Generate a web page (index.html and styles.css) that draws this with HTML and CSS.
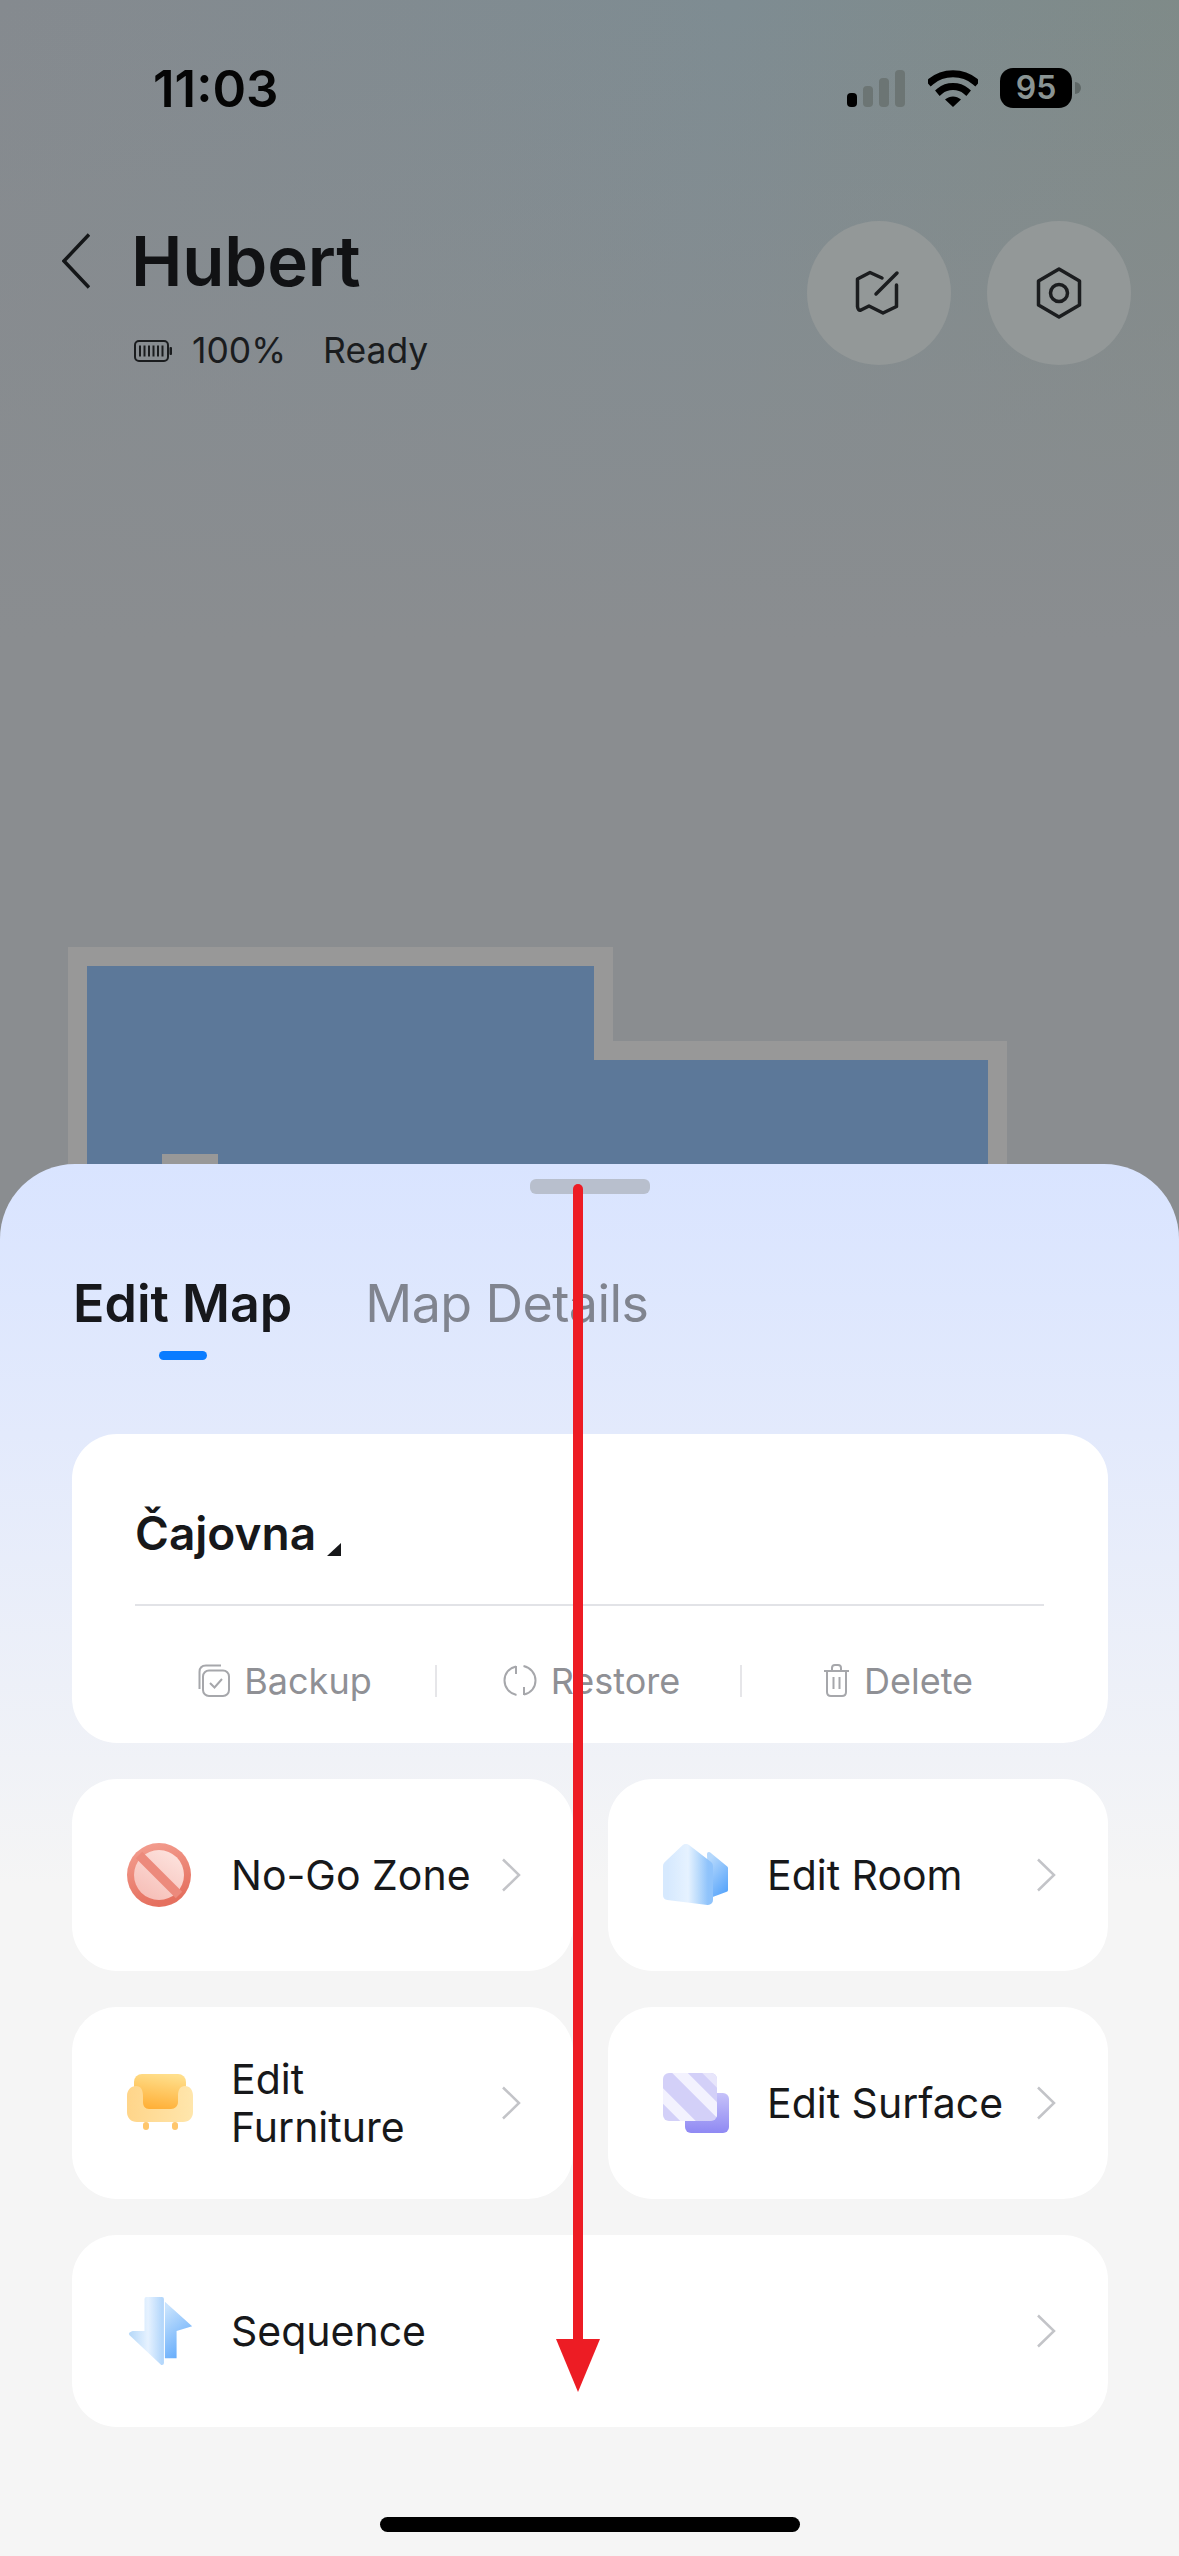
FILE: index.html
```html
<!DOCTYPE html>
<html lang="en">
<head>
  <meta charset="UTF-8">
  <meta name="viewport" content="width=device-width, initial-scale=1.0">
  <title>Edit Map</title>
  <link rel="stylesheet" href="styles.css">
</head>
<body>
  <div class="screen">
    <div class="status-bar">
      <span class="time">11:03</span>
      <div class="status-icons">
        <svg class="signal" width="58" height="37" viewBox="0 0 58 37">
          <rect x="0" y="23" width="10" height="14" rx="4" fill="#000"/>
          <rect x="16" y="16" width="10" height="21" rx="4" fill="#6c7574"/>
          <rect x="32" y="8" width="10" height="29" rx="4" fill="#6c7574"/>
          <rect x="48" y="0" width="10" height="37" rx="4" fill="#6c7574"/>
        </svg>
        <svg class="wifi" width="50" height="37" viewBox="0 0 50 37">
          <path d="M3 11.5C15 1 35 1 47 11.5" fill="none" stroke="#000" stroke-width="7" stroke-linecap="square"/>
          <path d="M12 21C19 15 31 15 38 21" fill="none" stroke="#000" stroke-width="7" stroke-linecap="square"/>
          <path d="M25 37L17 29.5C22 25.5 28 25.5 33 29.5Z" fill="#000"/>
        </svg>
        <div class="batt">
          <span class="batt-level">95</span>
          <span class="batt-nub"></span>
        </div>
      </div>
    </div>

    <div class="header">
      <div class="title-block">
        <div class="title-row">
          <svg class="back" width="28" height="56" viewBox="0 0 28 56">
            <path d="M27 1.5L2 28L27 54.500" fill="none" stroke="#141618" stroke-width="3.500"/>
          </svg>
          <h1>Hubert</h1>
        </div>
        <div class="sub-row">
          <svg width="38" height="22" viewBox="0 0 38 22">
            <rect x="1" y="1" width="33" height="20" rx="4" fill="none" stroke="#1a1c1e" stroke-width="2"/>
            <path d="M6 5.500V16.500M10.500 5.500V16.500M15 5.500V16.500M19.500 5.500V16.500M24 5.500V16.500M28.500 5.500V16.500" stroke="#1a1c1e" stroke-width="2"/>
            <rect x="35.500" y="7" width="2.500" height="8" rx="1" fill="#1a1c1e"/>
          </svg>
          <span class="level">100%</span>
          <span class="state">Ready</span>
        </div>
      </div>
      <div class="round-btns">
        <div class="round-btn">
          <svg width="50" height="50" viewBox="0 0 50 50">
            <path d="M28 10L16 4.500L3.500 11V38.500C4 42 5 42.500 7 42L15 38L29 45L42.500 38.500V17M43 5L22 26" fill="none" stroke="#1b1d1f" stroke-width="3.500" stroke-linecap="round" stroke-linejoin="round"/>
          </svg>
        </div>
        <div class="round-btn">
          <svg width="50" height="54" viewBox="0 0 50 54">
            <path d="M25 3L45.500 15V39L25 51L4.500 39V15Z" fill="none" stroke="#1b1d1f" stroke-width="3.500" stroke-linejoin="round"/>
            <circle cx="25" cy="27" r="8.500" fill="none" stroke="#1b1d1f" stroke-width="3.500"/>
          </svg>
        </div>
      </div>
    </div>

    <div class="map-area">
      <svg class="map" width="1179" height="799" viewBox="0 365 1179 799">
        <path d="M68 1164V947H613V1041H1007V1164Z" fill="#989898"/>
        <path d="M87 1164V966H594V1060H988V1164Z" fill="#5c7899"/>
        <rect x="162" y="1154" width="56" height="10" fill="#989898"/>
      </svg>
    </div>

    <div class="sheet">
      <div class="handle"></div>
      <div class="tabs">
        <div class="tab active">Edit Map<span class="tab-mark"></span></div>
        <div class="tab">Map Details</div>
      </div>

      <div class="map-card">
        <div class="map-name">
          <span>Čajovna</span>
          <svg width="14" height="13" viewBox="0 0 14 13"><path d="M14 0V13H0Z" fill="#17181a"/></svg>
        </div>
        <div class="map-actions">
          <div class="action">
            <svg width="32" height="33" viewBox="0 0 32 33" fill="none" stroke="#a6a7ab" stroke-width="2">
              <rect x="5" y="6.500" width="26" height="25.500" rx="6"/>
              <path d="M1.500 25V8C1.500 4 4 1.500 8 1.500H23"/>
              <path d="M12 19L16.500 23.500L24 15"/>
            </svg>
            <span>Backup</span>
          </div>
          <div class="action">
            <svg width="34" height="33" viewBox="0 0 34 33" fill="none" stroke="#a6a7ab" stroke-width="2">
              <path d="M13 2.500C6 4 1.500 9.500 1.500 16.500C1.500 23.500 6.500 29.500 13.500 31"/>
              <path d="M21 30.500C28 29 32.500 23.500 32.500 16.500C32.500 9.500 27.500 3.500 20.500 2"/>
              <path d="M13 2L13 10M21 31L21 23"/>
            </svg>
            <span>Restore</span>
          </div>
          <div class="action">
            <svg width="27" height="33" viewBox="0 0 27 33" fill="none" stroke="#a6a7ab" stroke-width="2">
              <path d="M1 7H26M9 7V4C9 2 10 1 12 1H15C17 1 18 2 18 4V7"/>
              <path d="M4 7V28C4 30.500 5.500 32 8 32H19C21.500 32 23 30.500 23 28V7"/>
              <path d="M10.500 13V25M16.500 13V25"/>
            </svg>
            <span>Delete</span>
          </div>
        </div>
      </div>

      <div class="tile-grid">
        <div class="tile">
          <svg class="tile-icon" width="70" height="70" viewBox="0 0 70 70">
            <defs>
              <linearGradient id="nogoRing" x1="0" y1="0" x2="0.300" y2="1">
                <stop offset="0" stop-color="#f4a193"/>
                <stop offset="1" stop-color="#e5705f"/>
              </linearGradient>
              <linearGradient id="nogoFill" x1="0.800" y1="0" x2="0.200" y2="1">
                <stop offset="0" stop-color="#fde3de"/>
                <stop offset="1" stop-color="#f6bdb6"/>
              </linearGradient>
            </defs>
            <circle cx="32" cy="35" r="32" fill="url(#nogoRing)"/>
            <circle cx="32" cy="35" r="25" fill="url(#nogoFill)"/>
            <path d="M12 15L52 55" stroke="#ec8a7c" stroke-width="9"/>
          </svg>
          <span class="tile-label">No-Go Zone</span>
          <svg class="tile-arrow" width="20" height="34" viewBox="0 0 20 34"><path d="M2 1.500L18 17L2 32.500" fill="none" stroke="#c3c4c8" stroke-width="2.500"/></svg>
        </div>
        <div class="tile">
          <svg class="tile-icon" width="70" height="70" viewBox="0 0 70 70">
            <defs>
              <linearGradient id="roomBack" x1="0.300" y1="0" x2="0.800" y2="1">
                <stop offset="0" stop-color="#b5d8fc"/>
                <stop offset="1" stop-color="#5aa6fb"/>
              </linearGradient>
              <linearGradient id="roomFront" x1="0" y1="0" x2="1" y2="0">
                <stop offset="0" stop-color="#d6e9fe"/>
                <stop offset="0.500" stop-color="#e6f2ff"/>
                <stop offset="0.750" stop-color="#bcdcfc"/>
                <stop offset="1" stop-color="#8fc3fb"/>
              </linearGradient>
            </defs>
            <path d="M46 14L63 28V50L47 56Z" fill="url(#roomBack)" stroke="url(#roomBack)" stroke-width="4" stroke-linejoin="round"/>
            <path d="M23 9L45 26V60L5 55V26Z" fill="url(#roomFront)" stroke="url(#roomFront)" stroke-width="10" stroke-linejoin="round"/>
          </svg>
          <span class="tile-label">Edit Room</span>
          <svg class="tile-arrow" width="20" height="34" viewBox="0 0 20 34"><path d="M2 1.500L18 17L2 32.500" fill="none" stroke="#c3c4c8" stroke-width="2.500"/></svg>
        </div>
        <div class="tile">
          <svg class="tile-icon" width="70" height="70" viewBox="0 0 70 70">
            <defs>
              <linearGradient id="sofaBack" x1="0.600" y1="0" x2="0.400" y2="1">
                <stop offset="0" stop-color="#ffdf8c"/>
                <stop offset="1" stop-color="#ffa92c"/>
              </linearGradient>
              <linearGradient id="sofaBody" x1="0" y1="0" x2="1" y2="0">
                <stop offset="0" stop-color="#ffd58a"/>
                <stop offset="1" stop-color="#ffe6ac"/>
              </linearGradient>
            </defs>
            <rect x="16" y="54" width="6" height="8" rx="3" fill="#ffc66b"/>
            <rect x="45" y="54" width="6" height="8" rx="3" fill="#ffc66b"/>
            <rect x="7" y="6" width="52" height="40" rx="8" fill="url(#sofaBack)"/>
            <path d="M9 18C14 18 16 22 16 28V34C16 38 18 41 22 41H44C48 41 51 38 51 34V28C51 22 53 18 58 18C63 18 66 22 66 28V44C66 50 62 54 56 54H10C4 54 0 50 0 44V28C0 22 4 18 9 18Z" fill="url(#sofaBody)"/>
          </svg>
          <span class="tile-label">Edit<br>Furniture</span>
          <svg class="tile-arrow" width="20" height="34" viewBox="0 0 20 34"><path d="M2 1.500L18 17L2 32.500" fill="none" stroke="#c3c4c8" stroke-width="2.500"/></svg>
        </div>
        <div class="tile">
          <svg class="tile-icon" width="70" height="70" viewBox="0 0 70 70">
            <defs>
              <linearGradient id="surfBack" x1="0" y1="0" x2="0" y2="1">
                <stop offset="0" stop-color="#c6c2f9"/>
                <stop offset="1" stop-color="#8f89f3"/>
              </linearGradient>
              <clipPath id="surfClip"><rect x="0" y="5" width="54" height="48" rx="6"/></clipPath>
            </defs>
            <rect x="22" y="25" width="44" height="40" rx="6" fill="url(#surfBack)"/>
            <rect x="0" y="5" width="54" height="48" rx="6" fill="#d3d0f8"/>
            <g clip-path="url(#surfClip)" stroke="#f3f2fe" stroke-width="11">
              <path d="M10 -2L72 60"/>
              <path d="M-16 12L36 64"/>
              <path d="M36 -6L76 34" stroke="#e8e6fb"/>
            </g>
          </svg>
          <span class="tile-label">Edit Surface</span>
          <svg class="tile-arrow" width="20" height="34" viewBox="0 0 20 34"><path d="M2 1.500L18 17L2 32.500" fill="none" stroke="#c3c4c8" stroke-width="2.500"/></svg>
        </div>
        <div class="tile wide">
          <svg class="tile-icon" width="70" height="70" viewBox="0 0 70 72">
            <defs>
              <linearGradient id="seqBack" x1="0.300" y1="0" x2="0.700" y2="1">
                <stop offset="0" stop-color="#c8e3fd"/>
                <stop offset="1" stop-color="#5ea8fb"/>
              </linearGradient>
              <linearGradient id="seqFront" x1="0" y1="0" x2="1" y2="0">
                <stop offset="0" stop-color="#b9daf9"/>
                <stop offset="0.550" stop-color="#e6f2ff"/>
                <stop offset="1" stop-color="#b4d7fb"/>
              </linearGradient>
            </defs>
            <path d="M38 6L66 31L50 36V64H38Z" fill="url(#seqBack)" stroke-linejoin="round"/>
            <path d="M19 3H35V69L3 39L5 38H19Z" fill="url(#seqFront)" stroke="url(#seqFront)" stroke-width="4" stroke-linejoin="round"/>
          </svg>
          <span class="tile-label">Sequence</span>
          <svg class="tile-arrow" width="20" height="34" viewBox="0 0 20 34"><path d="M2 1.500L18 17L2 32.500" fill="none" stroke="#c3c4c8" stroke-width="2.500"/></svg>
        </div>
      </div>

      <div class="home-bar"></div>
    </div>

    <svg class="guide-arrow" width="44" height="1208" viewBox="0 0 44 1208">
      <path d="M17 5A5 5 0 0 1 27 5V1156H17Z" fill="#ed1c24"/>
      <path d="M0 1155H44L22 1208Z" fill="#ed1c24"/>
    </svg>
  </div>
</body>
</html>
```

FILE: styles.css
```css
* {
  margin: 0;
  padding: 0;
  box-sizing: border-box;
}

body {
  font-family: 'Inter', 'Liberation Sans', sans-serif;
  color: #17181a;
  background: #8a8d90;
}

.screen {
  position: relative;
  width: 1179px;
  height: 2556px;
  overflow: hidden;
  display: flex;
  flex-direction: column;
  background:
    linear-gradient(180deg, rgba(138, 141, 144, 0) 0, #8a8d90 640px),
    linear-gradient(100deg, #858a8f 0, #7e8c92 45%, #80897f 100%);
}

/* status bar */
.status-bar {
  height: 176px;
  flex: none;
  display: flex;
  align-items: center;
  justify-content: space-between;
  padding: 0 98px 0 153px;
}

.time {
  font-size: 51px;
  font-weight: 600;
  color: #050505;
}

.status-icons {
  display: flex;
  align-items: center;
}

.wifi {
  margin-left: 23px;
}

.batt {
  margin-left: 22px;
  display: flex;
  align-items: center;
}

.batt-level {
  width: 72px;
  height: 40px;
  border-radius: 13px;
  background: #000;
  color: #8a9493;
  font-size: 32px;
  font-weight: 600;
  line-height: 40px;
  text-align: center;
}

.batt-nub {
  width: 6px;
  height: 12px;
  margin-left: 3px;
  border-radius: 0 6px 6px 0;
  background: #5f6867;
}

/* header */
.header {
  flex: none;
  height: 189px;
  display: flex;
  justify-content: space-between;
  padding: 45px 48px 0 62px;
}

.title-row {
  display: flex;
  align-items: center;
  height: 80px;
}

.title-row h1 {
  margin-left: 41px;
  font-size: 69px;
  font-weight: 600;
  letter-spacing: -0.2px;
  color: #111214;
}

.sub-row {
  display: flex;
  align-items: center;
  margin-top: 28px;
  padding-left: 72px;
  font-size: 35.500px;
  color: #1a1c1e;
}

.level {
  margin-left: 20px;
}

.state {
  margin-left: 37px;
}

.round-btns {
  display: flex;
  gap: 36px;
}

.round-btn {
  width: 144px;
  height: 144px;
  border-radius: 50%;
  background: #939898;
  display: flex;
  align-items: center;
  justify-content: center;
}

/* map */
.map-area {
  flex: none;
  height: 799px;
  overflow: hidden;
}

.map {
  display: block;
}

/* bottom sheet */
.sheet {
  flex: 1;
  display: flex;
  flex-direction: column;
  padding: 0 71px 0 72px;
  border-radius: 75px 75px 0 0;
  background: linear-gradient(180deg, #d9e4ff 0, #e3eafc 270px, #f5f5f5 720px);
}

.handle {
  width: 120px;
  height: 15px;
  margin: 15px auto 0;
  border-radius: 6px;
  background: #b8bfcd;
}

.tabs {
  display: flex;
  gap: 73px;
  margin-top: 78px;
  padding-left: 1px;
}

.tab {
  position: relative;
  font-size: 52px;
  line-height: 64px;
  letter-spacing: -0.6px;
  color: #80848f;
}

.tab.active {
  font-weight: 600;
  letter-spacing: 0;
  color: #17181c;
}

.tab-mark {
  position: absolute;
  left: 50%;
  top: 79px;
  width: 48px;
  height: 9px;
  margin-left: -24px;
  border-radius: 5px;
  background: #0a7cff;
}

.map-card {
  margin-top: 98px;
  height: 309px;
  padding: 0 64px 0 63px;
  border-radius: 45px;
  background: #fff;
  display: flex;
  flex-direction: column;
}

.map-name {
  height: 172px;
  flex: none;
  display: flex;
  align-items: center;
  padding-top: 28px;
  border-bottom: 2px solid #e2e3e7;
  font-size: 46px;
  font-weight: 600;
}

.map-name svg {
  margin: 32px 0 0 11px;
}

.map-actions {
  flex: 1;
  display: grid;
  grid-template-columns: 300px 305px 304px;
  align-items: center;
  padding-top: 12px;
}

.action {
  height: 32px;
  display: flex;
  align-items: center;
  justify-content: center;
  gap: 14px;
  font-size: 36px;
  color: #8f9095;
}

.action + .action {
  border-left: 2px solid #e6e6e9;
  padding-left: 6px;
}

.action:last-child {
  padding-left: 10px;
}

.tile-grid {
  display: grid;
  grid-template-columns: 501px 500px;
  column-gap: 35px;
  row-gap: 36px;
  margin-top: 36px;
}

.tile {
  height: 192px;
  padding: 0 52px 0 55px;
  border-radius: 45px;
  background: #fff;
  display: flex;
  align-items: center;
}

.tile.wide {
  grid-column: 1 / 3;
}

.tile-icon {
  flex: none;
  filter: blur(0.5px);
}

.tile-label {
  margin-left: 34px;
  font-size: 41px;
  line-height: 48px;
  color: #17181a;
}

.tile-arrow {
  flex: none;
  margin-left: auto;
}

.home-bar {
  width: 420px;
  height: 15px;
  margin: 90px auto 0;
  border-radius: 8px;
  background: #000;
}

/* red annotation drawn over the page */
.guide-arrow {
  position: absolute;
  left: 556px;
  top: 1184px;
}
```
